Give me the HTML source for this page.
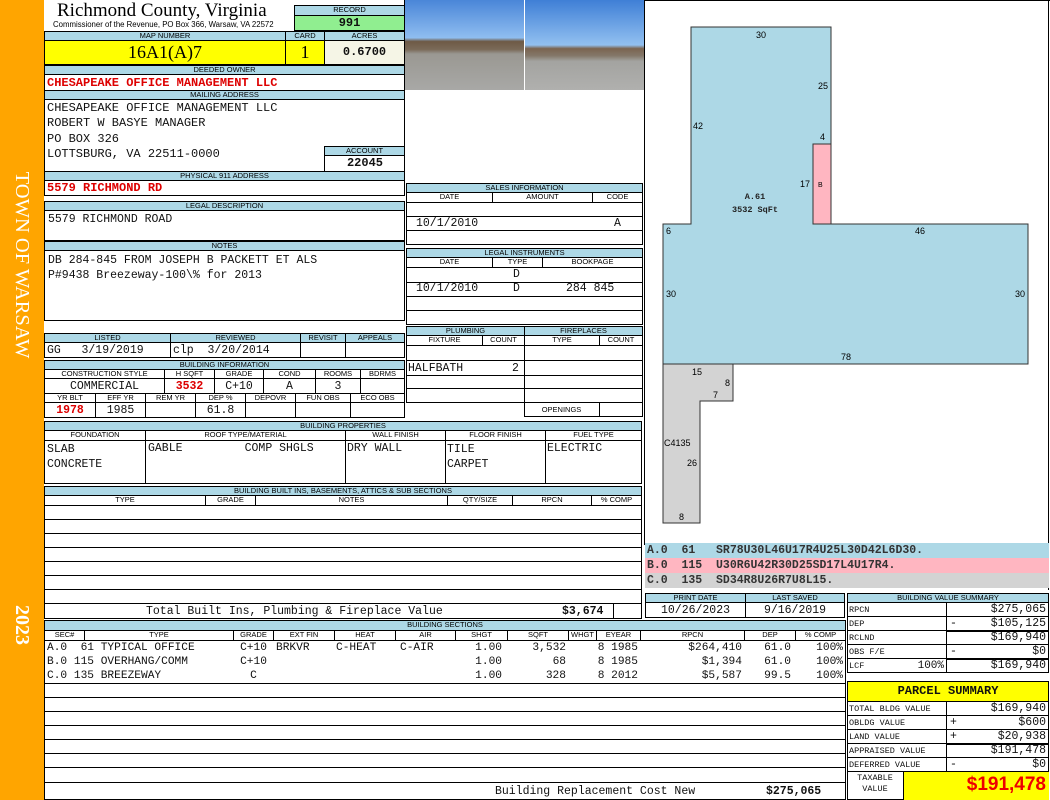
<!DOCTYPE html>
<html><head><meta charset="utf-8"><style>
*{margin:0;padding:0;box-sizing:border-box}
body{width:1050px;height:800px;position:relative;background:#fff;overflow:hidden;font-family:"Liberation Sans",sans-serif}
div{position:absolute}
.h{background:#add8e6;border:1px solid #000;font-size:7.5px;text-align:center;line-height:8px;color:#000;white-space:nowrap;overflow:hidden}
.b{border:1px solid #000;background:#fff}
.m{font-family:"Liberation Mono",monospace;font-size:11.5px;white-space:nowrap;color:#111}
.r{color:#d00;font-weight:bold}
.c{text-align:center}
.rt{text-align:right}
</style></head><body>
<!-- orange strip -->
<div style="left:0;top:0;width:44px;height:800px;background:#ffa500"></div>
<div style="left:10px;top:150px;width:24px;height:230px;"><div style="left:-103px;top:103px;width:230px;height:24px;transform:rotate(90deg);color:#fff;font:20.5px 'Liberation Serif',serif;text-align:center;line-height:24px;white-space:nowrap">TOWN OF WARSAW</div></div>
<div style="left:10px;top:598px;width:24px;height:54px;"><div style="left:-15px;top:15px;width:54px;height:24px;transform:rotate(90deg);color:#fff;font:bold 20px 'Liberation Serif',serif;text-align:center;line-height:24px">2023</div></div>

<!-- title -->
<div style="left:57px;top:0px;font:19px 'Liberation Serif',serif;white-space:nowrap">Richmond County, Virginia</div>
<div style="left:53px;top:20px;font:7.8px 'Liberation Sans',sans-serif;white-space:nowrap">Commissioner of the Revenue, PO Box 366, Warsaw, VA 22572</div>
<div class="h" style="left:294px;top:5px;width:111px;height:11px">RECORD</div>
<div class="b m c" style="left:294px;top:15px;width:111px;height:16px;background:#90ee90;font-weight:bold;font-size:12px;line-height:14px">991</div>

<div class="h" style="left:44px;top:31px;width:242px;height:10px">MAP NUMBER</div>
<div class="h" style="left:285px;top:31px;width:40px;height:10px">CARD</div>
<div class="h" style="left:324px;top:31px;width:81px;height:10px">ACRES</div>
<div class="b c" style="left:44px;top:40px;width:242px;height:25px;background:#ff0;font:18px 'Liberation Serif',serif;line-height:23px">16A1(A)7</div>
<div class="b c" style="left:285px;top:40px;width:40px;height:25px;background:#ff0;font:18px 'Liberation Serif',serif;line-height:23px">1</div>
<div class="b m c" style="left:324px;top:40px;width:81px;height:25px;background:#f5f5e6;font-weight:bold;line-height:23px;font-size:12px">0.6700</div>

<div class="h" style="left:44px;top:65px;width:361px;height:10px">DEEDED OWNER</div>
<div class="b m r" style="left:44px;top:74px;width:361px;height:17px;line-height:16px;padding-left:2px;font-size:12px">CHESAPEAKE OFFICE MANAGEMENT LLC</div>
<div class="h" style="left:44px;top:90px;width:361px;height:10px">MAILING ADDRESS</div>
<div class="b" style="left:44px;top:99px;width:361px;height:73px"></div>
<div class="m" style="left:47px;top:101px;line-height:15.3px;font-size:12px">CHESAPEAKE OFFICE MANAGEMENT LLC<br>ROBERT W BASYE MANAGER<br>PO BOX 326<br>LOTTSBURG, VA 22511-0000</div>
<div class="h" style="left:324px;top:146px;width:81px;height:10px">ACCOUNT</div>
<div class="m c" style="left:324px;top:155px;width:81px;height:16px;font-weight:bold;line-height:16px;font-size:12px;border-left:1px solid #000">22045</div>
<div class="h" style="left:44px;top:171px;width:361px;height:10px">PHYSICAL 911 ADDRESS</div>
<div class="b m r" style="left:44px;top:180px;width:361px;height:16px;line-height:15px;padding-left:2px;font-size:12px">5579 RICHMOND RD</div>

<div class="h" style="left:44px;top:201px;width:361px;height:10px">LEGAL DESCRIPTION</div>
<div class="b m" style="left:44px;top:210px;width:361px;height:31px;padding:2px 3px">5579 RICHMOND ROAD</div>
<div class="h" style="left:44px;top:241px;width:361px;height:10px">NOTES</div>
<div class="b m" style="left:44px;top:250px;width:361px;height:71px;padding:2px 3px;line-height:15px">DB 284-845 FROM JOSEPH B PACKETT ET ALS<br>P#9438 Breezeway-100\% for 2013</div>

<!-- listed -->
<div class="h" style="left:44px;top:333px;width:127px;height:10px">LISTED</div>
<div class="h" style="left:170px;top:333px;width:131px;height:10px">REVIEWED</div>
<div class="h" style="left:300px;top:333px;width:46px;height:10px">REVISIT</div>
<div class="h" style="left:345px;top:333px;width:60px;height:10px">APPEALS</div>
<div class="b m" style="left:44px;top:342px;width:127px;height:16px;padding-left:2px;line-height:15px">GG &nbsp;&nbsp;3/19/2019</div>
<div class="b m" style="left:170px;top:342px;width:131px;height:16px;padding-left:2px;line-height:15px">clp &nbsp;3/20/2014</div>
<div class="b" style="left:300px;top:342px;width:46px;height:16px"></div>
<div class="b" style="left:345px;top:342px;width:60px;height:16px"></div>

<div class="h" style="left:44px;top:360px;width:361px;height:10px">BUILDING INFORMATION</div>
<div class="h" style="left:44px;top:369px;width:121px;height:10px;background:#fff">CONSTRUCTION STYLE</div>
<div class="h" style="left:164px;top:369px;width:51px;height:10px;background:#fff">H SQFT</div>
<div class="h" style="left:214px;top:369px;width:50px;height:10px;background:#fff">GRADE</div>
<div class="h" style="left:263px;top:369px;width:53px;height:10px;background:#fff">COND</div>
<div class="h" style="left:315px;top:369px;width:46px;height:10px;background:#fff">ROOMS</div>
<div class="h" style="left:360px;top:369px;width:45px;height:10px;background:#fff">BDRMS</div>
<div class="b m c" style="left:44px;top:378px;width:121px;height:16px;line-height:15px">COMMERCIAL</div>
<div class="b m c r" style="left:164px;top:378px;width:51px;height:16px;line-height:15px">3532</div>
<div class="b m c" style="left:214px;top:378px;width:50px;height:16px;line-height:15px">C+10</div>
<div class="b m c" style="left:263px;top:378px;width:53px;height:16px;line-height:15px">A</div>
<div class="b m c" style="left:315px;top:378px;width:46px;height:16px;line-height:15px">3</div>
<div class="b" style="left:360px;top:378px;width:45px;height:16px"></div>
<div class="h" style="left:44px;top:393px;width:52px;height:10px;background:#fff">YR BLT</div>
<div class="h" style="left:95px;top:393px;width:51px;height:10px;background:#fff">EFF YR</div>
<div class="h" style="left:145px;top:393px;width:51px;height:10px;background:#fff">REM YR</div>
<div class="h" style="left:195px;top:393px;width:51px;height:10px;background:#fff">DEP %</div>
<div class="h" style="left:245px;top:393px;width:51px;height:10px;background:#fff">DEPOVR</div>
<div class="h" style="left:295px;top:393px;width:56px;height:10px;background:#fff">FUN OBS</div>
<div class="h" style="left:350px;top:393px;width:55px;height:10px;background:#fff">ECO OBS</div>
<div class="b m c r" style="left:44px;top:402px;width:52px;height:16px;line-height:15px">1978</div>
<div class="b m c" style="left:95px;top:402px;width:51px;height:16px;line-height:15px">1985</div>
<div class="b" style="left:145px;top:402px;width:51px;height:16px"></div>
<div class="b m c" style="left:195px;top:402px;width:51px;height:16px;line-height:15px">61.8</div>
<div class="b" style="left:245px;top:402px;width:51px;height:16px"></div>
<div class="b" style="left:295px;top:402px;width:56px;height:16px"></div>
<div class="b" style="left:350px;top:402px;width:55px;height:16px"></div>

<!-- building properties -->
<div class="h" style="left:44px;top:421px;width:598px;height:10px">BUILDING PROPERTIES</div>
<div class="h" style="left:44px;top:430px;width:102px;height:11px;background:#fff">FOUNDATION</div>
<div class="h" style="left:145px;top:430px;width:201px;height:11px;background:#fff">ROOF TYPE/MATERIAL</div>
<div class="h" style="left:345px;top:430px;width:101px;height:11px;background:#fff">WALL FINISH</div>
<div class="h" style="left:445px;top:430px;width:101px;height:11px;background:#fff">FLOOR FINISH</div>
<div class="h" style="left:545px;top:430px;width:97px;height:11px;background:#fff">FUEL TYPE</div>
<div class="b m" style="left:44px;top:440px;width:102px;height:44px;padding:1px 2px;line-height:15px">SLAB<br>CONCRETE</div>
<div class="b m" style="left:145px;top:440px;width:201px;height:44px;padding:1px 2px">GABLE &nbsp;&nbsp;&nbsp;&nbsp;&nbsp;&nbsp;&nbsp;&nbsp;COMP SHGLS</div>
<div class="b m" style="left:345px;top:440px;width:101px;height:44px;padding:1px 1px">DRY WALL</div>
<div class="b m" style="left:445px;top:440px;width:101px;height:44px;padding:1px 1px;line-height:15px">TILE<br>CARPET</div>
<div class="b m" style="left:545px;top:440px;width:97px;height:44px;padding:1px 1px">ELECTRIC</div>

<!-- built ins -->
<div class="h" style="left:44px;top:486px;width:598px;height:10px">BUILDING BUILT INS, BASEMENTS, ATTICS &amp; SUB SECTIONS</div>
<div class="h" style="left:44px;top:495px;width:162px;height:11px;background:#fff">TYPE</div>
<div class="h" style="left:205px;top:495px;width:51px;height:11px;background:#fff">GRADE</div>
<div class="h" style="left:255px;top:495px;width:193px;height:11px;background:#fff">NOTES</div>
<div class="h" style="left:447px;top:495px;width:66px;height:11px;background:#fff">QTY/SIZE</div>
<div class="h" style="left:512px;top:495px;width:80px;height:11px;background:#fff">RPCN</div>
<div class="h" style="left:591px;top:495px;width:51px;height:11px;background:#fff">% COMP</div>
<div class="b" style="left:44px;top:505px;width:598px;height:114px"></div>
<div style="left:44px;top:519px;width:598px;height:1px;background:#000"></div>
<div style="left:44px;top:533px;width:598px;height:1px;background:#000"></div>
<div style="left:44px;top:547px;width:598px;height:1px;background:#000"></div>
<div style="left:44px;top:561px;width:598px;height:1px;background:#000"></div>
<div style="left:44px;top:575px;width:598px;height:1px;background:#000"></div>
<div style="left:44px;top:589px;width:598px;height:1px;background:#000"></div>
<div style="left:44px;top:603px;width:598px;height:1px;background:#000"></div>
<div class="m" style="left:146px;top:604px;line-height:15px">Total Built Ins, Plumbing &amp; Fireplace Value</div>
<div class="m" style="left:562px;top:604px;line-height:15px;font-weight:bold">$3,674</div>
<div style="left:613px;top:604px;width:1px;height:15px;background:#000"></div>

<!-- photos -->
<div style="left:405px;top:0;width:119px;height:90px;background:linear-gradient(#4a86d8 0,#8fbdf0 42%,#6e5a46 46%,#7a6a58 55%,#9a9892 60%,#a8a8a6 100%)"></div>
<div style="left:525px;top:0;width:119px;height:90px;background:linear-gradient(#3f7fd6 0,#92c0f0 50%,#7a6450 54%,#84786a 62%,#a3a3a0 68%,#b0b0ae 100%)"></div>
<div style="left:404px;top:0;width:1px;height:183px;background:#000"></div>
<div style="left:644px;top:0;width:1px;height:545px;background:#000"></div>

<!-- sales -->
<div class="h" style="left:406px;top:183px;width:237px;height:10px">SALES INFORMATION</div>
<div class="h" style="left:406px;top:192px;width:87px;height:11px;background:#fff">DATE</div>
<div class="h" style="left:492px;top:192px;width:101px;height:11px;background:#fff">AMOUNT</div>
<div class="h" style="left:592px;top:192px;width:51px;height:11px;background:#fff">CODE</div>
<div class="b" style="left:406px;top:202px;width:237px;height:43px"></div>
<div style="left:406px;top:216px;width:237px;height:1px;background:#000"></div>
<div style="left:406px;top:230px;width:237px;height:1px;background:#000"></div>
<div class="m" style="left:416px;top:217px;line-height:14px">10/1/2010</div>
<div class="m" style="left:614px;top:217px;line-height:14px">A</div>
<div class="h" style="left:406px;top:248px;width:237px;height:10px">LEGAL INSTRUMENTS</div>
<div class="h" style="left:406px;top:257px;width:87px;height:11px;background:#fff">DATE</div>
<div class="h" style="left:492px;top:257px;width:51px;height:11px;background:#fff">TYPE</div>
<div class="h" style="left:542px;top:257px;width:101px;height:11px;background:#fff">BOOKPAGE</div>
<div class="b" style="left:406px;top:267px;width:237px;height:58px"></div>
<div style="left:406px;top:282px;width:237px;height:1px;background:#000"></div>
<div style="left:406px;top:296px;width:237px;height:1px;background:#000"></div>
<div style="left:406px;top:310px;width:237px;height:1px;background:#000"></div>
<div class="m" style="left:513px;top:268px;line-height:14px">D</div>
<div class="m" style="left:416px;top:282px;line-height:14px">10/1/2010</div>
<div class="m" style="left:513px;top:282px;line-height:14px">D</div>
<div class="m" style="left:566px;top:282px;line-height:14px">284 845</div>

<!-- plumbing -->
<div class="h" style="left:406px;top:326px;width:119px;height:10px">PLUMBING</div>
<div class="h" style="left:524px;top:326px;width:119px;height:10px">FIREPLACES</div>
<div class="h" style="left:406px;top:335px;width:77px;height:11px;background:#fff">FIXTURE</div>
<div class="h" style="left:482px;top:335px;width:43px;height:11px;background:#fff">COUNT</div>
<div class="h" style="left:524px;top:335px;width:76px;height:11px;background:#fff">TYPE</div>
<div class="h" style="left:599px;top:335px;width:44px;height:11px;background:#fff">COUNT</div>
<div style="left:406px;top:345px;width:1px;height:57px;background:#000"></div>
<div style="left:524px;top:345px;width:1px;height:72px;background:#000"></div>
<div style="left:642px;top:345px;width:1px;height:72px;background:#000"></div>
<div style="left:406px;top:360px;width:237px;height:1px;background:#000"></div>
<div style="left:406px;top:375px;width:237px;height:1px;background:#000"></div>
<div style="left:406px;top:388px;width:237px;height:1px;background:#000"></div>
<div style="left:406px;top:402px;width:237px;height:1px;background:#000"></div>
<div style="left:524px;top:416px;width:119px;height:1px;background:#000"></div>
<div style="left:599px;top:402px;width:1px;height:15px;background:#000"></div>
<div class="m" style="left:408px;top:362px;line-height:14px">HALFBATH</div>
<div class="m" style="left:512px;top:362px;line-height:14px">2</div>
<div style="left:524px;top:404px;width:75px;font-size:7.5px;text-align:center;line-height:11px">OPENINGS</div>

<!-- sketch -->
<svg style="position:absolute;left:0;top:0" width="1050" height="545">
<polygon points="691,27 831,27 831,144 813,144 813,224 1028,224 1028,364 663,364 663,224 691,224" fill="#add8e6" stroke="#333" stroke-width="1"/>
<polygon points="813,144 831,144 831,224 813,224" fill="#ffb6c1" stroke="#333" stroke-width="1"/>
<polygon points="663,364 733,364 733,401 700,401 700,523 663,523" fill="#d3d3d3" stroke="#333" stroke-width="1"/>
<g font-family="Liberation Sans" font-size="9" fill="#000">
<text x="756" y="38">30</text><text x="818" y="89">25</text><text x="693" y="129">42</text>
<text x="820" y="140">4</text><text x="800" y="187">17</text><text x="818" y="187" font-size="7">B</text>
<text x="666" y="234">6</text><text x="915" y="234">46</text><text x="666" y="297">30</text><text x="1015" y="297">30</text>
<text x="841" y="360">78</text><text x="692" y="375">15</text><text x="725" y="386">8</text><text x="713" y="398">7</text>
<text x="664" y="446">C4135</text><text x="687" y="466">26</text><text x="679" y="520">8</text>
</g>
<g font-family="Liberation Mono" font-size="8.5" font-weight="bold" fill="#222" text-anchor="middle">
<text x="755" y="199">A.61</text><text x="755" y="212">3532 SqFt</text></g>
</svg>
<div style="left:645px;top:0;width:405px;height:1px;background:#000"></div>
<div style="left:1048px;top:0;width:1px;height:590px;background:#000"></div>
<div class="m" style="left:645px;top:543px;width:404px;height:15px;background:#add8e6;padding-left:2px;line-height:15px;font-weight:bold;color:#333">A.0 &nbsp;61 &nbsp;&nbsp;SR78U30L46U17R4U25L30D42L6D30.</div>
<div class="m" style="left:645px;top:558px;width:404px;height:15px;background:#ffb6c1;padding-left:2px;line-height:15px;font-weight:bold;color:#333">B.0 &nbsp;115 &nbsp;U30R6U42R30D25SD17L4U17R4.</div>
<div class="m" style="left:645px;top:573px;width:404px;height:15px;background:#d3d3d3;padding-left:2px;line-height:15px;font-weight:bold;color:#333">C.0 &nbsp;135 &nbsp;SD34R8U26R7U8L15.</div>

<!-- print date -->
<div class="h" style="left:645px;top:593px;width:101px;height:10px">PRINT DATE</div>
<div class="h" style="left:745px;top:593px;width:100px;height:10px">LAST SAVED</div>
<div class="b m c" style="left:645px;top:602px;width:101px;height:16px;line-height:15px">10/26/2023</div>
<div class="b m c" style="left:745px;top:602px;width:100px;height:16px;line-height:15px">9/16/2019</div>

<!-- building sections -->
<div class="h" style="left:44px;top:620px;width:802px;height:11px">BUILDING SECTIONS</div>
<div class="h" style="left:44px;top:630px;width:41px;height:11px;background:#fff">SEC#</div>
<div class="h" style="left:84px;top:630px;width:150px;height:11px;background:#fff">TYPE</div>
<div class="h" style="left:233px;top:630px;width:41px;height:11px;background:#fff">GRADE</div>
<div class="h" style="left:273px;top:630px;width:62px;height:11px;background:#fff">EXT FIN</div>
<div class="h" style="left:334px;top:630px;width:62px;height:11px;background:#fff">HEAT</div>
<div class="h" style="left:395px;top:630px;width:61px;height:11px;background:#fff">AIR</div>
<div class="h" style="left:455px;top:630px;width:53px;height:11px;background:#fff">SHGT</div>
<div class="h" style="left:507px;top:630px;width:62px;height:11px;background:#fff">SQFT</div>
<div class="h" style="left:568px;top:630px;width:29px;height:11px;background:#fff">WHGT</div>
<div class="h" style="left:596px;top:630px;width:45px;height:11px;background:#fff">EYEAR</div>
<div class="h" style="left:640px;top:630px;width:105px;height:11px;background:#fff">RPCN</div>
<div class="h" style="left:744px;top:630px;width:52px;height:11px;background:#fff">DEP</div>
<div class="h" style="left:795px;top:630px;width:51px;height:11px;background:#fff">% COMP</div>
<div class="b" style="left:44px;top:640px;width:802px;height:160px"></div>
<div style="left:44px;top:683px;width:802px;height:1px;background:#000"></div>
<div style="left:44px;top:697px;width:802px;height:1px;background:#000"></div>
<div style="left:44px;top:711px;width:802px;height:1px;background:#000"></div>
<div style="left:44px;top:725px;width:802px;height:1px;background:#000"></div>
<div style="left:44px;top:739px;width:802px;height:1px;background:#000"></div>
<div style="left:44px;top:753px;width:802px;height:1px;background:#000"></div>
<div style="left:44px;top:767px;width:802px;height:1px;background:#000"></div>
<div style="left:44px;top:782px;width:802px;height:1px;background:#000"></div>
<div class="m" style="left:47px;top:641px;line-height:14px;font-size:11.2px">A.0 &nbsp;61 TYPICAL OFFICE<br>B.0 115 OVERHANG/COMM<br>C.0 135 BREEZEWAY</div>
<div class="m c" style="left:233px;top:641px;width:41px;line-height:14px;font-size:11.2px">C+10<br>C+10<br>C</div>
<div class="m" style="left:276px;top:641px;line-height:14px;font-size:11.2px">BRKVR</div>
<div class="m" style="left:336px;top:641px;line-height:14px;font-size:11.2px">C-HEAT</div>
<div class="m" style="left:400px;top:641px;line-height:14px;font-size:11.2px">C-AIR</div>
<div class="m rt" style="left:455px;top:641px;width:47px;line-height:14px;font-size:11.2px">1.00<br>1.00<br>1.00</div>
<div class="m rt" style="left:507px;top:641px;width:59px;line-height:14px;font-size:11.2px">3,532<br>68<br>328</div>
<div class="m rt" style="left:568px;top:641px;width:70px;line-height:14px;font-size:11.2px">8 1985<br>8 1985<br>8 2012</div>
<div class="m rt" style="left:640px;top:641px;width:102px;line-height:14px;font-size:11.2px">$264,410<br>$1,394<br>$5,587</div>
<div class="m rt" style="left:744px;top:641px;width:47px;line-height:14px;font-size:11.2px">61.0<br>61.0<br>99.5</div>
<div class="m rt" style="left:795px;top:641px;width:48px;line-height:14px;font-size:11.2px">100%<br>100%<br>100%</div>
<div class="m" style="left:495px;top:784px;line-height:15px">Building Replacement Cost New</div>
<div class="m" style="left:766px;top:784px;line-height:15px;font-weight:bold">$275,065</div>

<!-- value summary -->
<div class="h" style="left:847px;top:593px;width:202px;height:10px">BUILDING VALUE SUMMARY</div>
<div class="b" style="left:847px;top:602px;width:202px;height:71px"></div>
<div style="left:946px;top:602px;width:1px;height:71px;background:#000"></div>
<div style="left:847px;top:616px;width:202px;height:1px;background:#000"></div>
<div style="left:946px;top:630px;width:103px;height:2px;background:#000"></div>
<div style="left:847px;top:630px;width:202px;height:1px;background:#000"></div>
<div style="left:847px;top:644px;width:202px;height:1px;background:#000"></div>
<div style="left:946px;top:658px;width:103px;height:2px;background:#000"></div>
<div style="left:847px;top:658px;width:202px;height:1px;background:#000"></div>
<div class="m" style="left:849px;top:603px;line-height:14px;font-size:8.5px">RPCN<br>DEP<br>RCLND<br>OBS F/E<br>LCF</div>
<div class="m" style="left:900px;top:659px;width:44px;line-height:14px;font-size:11px"><span style="position:absolute;right:0">100%</span></div>
<div class="m" style="left:950px;top:617px;line-height:14px">-</div>
<div class="m" style="left:950px;top:645px;line-height:14px">-</div>
<div class="m rt" style="left:946px;top:603px;width:100px;line-height:14px">$275,065<br>$105,125<br>$169,940<br>$0<br>$169,940</div>

<!-- parcel summary -->
<div class="b m c" style="left:847px;top:681px;width:202px;height:21px;background:#ff0;font-weight:bold;line-height:19px;font-size:12px">PARCEL SUMMARY</div>
<div class="b" style="left:847px;top:701px;width:202px;height:99px"></div>
<div style="left:946px;top:701px;width:1px;height:70px;background:#000"></div>
<div style="left:847px;top:715px;width:202px;height:1px;background:#000"></div>
<div style="left:847px;top:729px;width:202px;height:1px;background:#000"></div>
<div style="left:946px;top:743px;width:103px;height:2px;background:#000"></div>
<div style="left:847px;top:743px;width:202px;height:1px;background:#000"></div>
<div style="left:847px;top:757px;width:202px;height:1px;background:#000"></div>
<div style="left:847px;top:771px;width:202px;height:1px;background:#000"></div>
<div class="m" style="left:849px;top:702px;line-height:14px;font-size:8.5px">TOTAL BLDG VALUE<br>OBLDG VALUE<br>LAND VALUE<br>APPRAISED VALUE<br>DEFERRED VALUE</div>
<div class="m" style="left:950px;top:716px;line-height:14px">+<br>+<br><br>-</div>
<div class="m rt" style="left:946px;top:702px;width:100px;line-height:14px">$169,940<br>$600<br>$20,938<br>$191,478<br>$0</div>
<div class="m c" style="left:847px;top:773px;width:56px;line-height:11px;font-size:8.5px">TAXABLE<br>VALUE</div>
<div style="left:903px;top:772px;width:146px;height:28px;background:#ff0;border-left:1px solid #000;color:#e00;font:bold 19px 'Liberation Sans',sans-serif;text-align:right;line-height:26px;padding-right:3px">$191,478</div>
</body></html>
